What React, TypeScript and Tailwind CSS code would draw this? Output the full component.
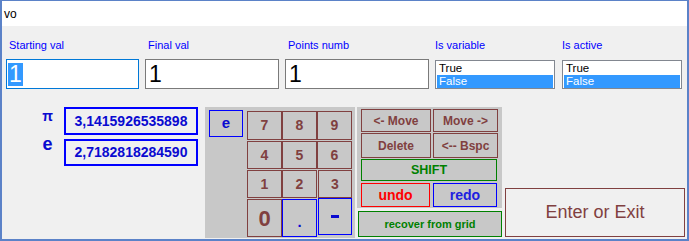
import React from 'react';

const brownBtn =
  'flex items-center justify-center border border-[#804040] bg-[#c8c8c8] text-[#804040] font-bold';

const Field: React.FC<{ label: string; w: string; ml: string; focused?: boolean }> = ({ label, w, ml, focused }) => (
  <div className={`flex flex-col ${w} ${ml}`}>
    <div className="h-[20px] pl-[3px] text-[11px] leading-[13px] text-[#0000ff]">{label}</div>
    <div
      className={`h-[30px] bg-white border flex items-center pl-[1px] ${
        focused ? 'border-[#0078d7]' : 'border-[#7a7a7a]'
      }`}
    >
      {focused ? (
        <span className="bg-[#3399ff] text-white text-[23px] leading-[23px] pl-[1px] pr-[1px]">1</span>
      ) : (
        <span className="text-black text-[23px] leading-[23px] pl-[2px]">1</span>
      )}
    </div>
  </div>
);

const ListField: React.FC<{ label: string; ml: string }> = ({ label, ml }) => (
  <div className={`flex flex-col w-[120px] ${ml}`}>
    <div className="h-[21px] text-[11px] leading-[13px] text-[#0000ff]">{label}</div>
    <div className="h-[29px] bg-white border border-[#828790] p-[1px] text-[11.5px] leading-[13px]">
      <div className="pl-[2px] text-black">True</div>
      <div className="pl-[2px] bg-[#3399ff] text-white">False</div>
    </div>
  </div>
);

export default function App() {
  const digits = ['7', '8', '9', '4', '5', '6', '1', '2', '3'];

  return (
    <div className="w-[689px] h-[241px] flex flex-col bg-[#f0f0f0] border-t border-b-2 border-x-2 border-[#5b82c8] font-['Liberation_Sans',Arial,sans-serif] overflow-hidden">
      {/* title strip */}
      <div className="h-[25px] bg-white pl-[2px] pt-[6px] text-[12px] leading-[14px] text-black">vo</div>

      {/* inputs */}
      <div className="h-[63px] pt-[13px] flex">
        <Field label="Starting val" w="w-[133px]" ml="ml-[4px]" focused />
        <Field label="Final val" w="w-[134px]" ml="ml-[6px]" />
        <Field label="Points numb" w="w-[144px]" ml="ml-[6px]" />
        <ListField label="Is variable" ml="ml-[6px]" />
        <ListField label="Is active" ml="ml-[7px]" />
      </div>

      {/* lower area */}
      <div className="h-[150px] pt-[18px] flex items-start">
        <div className="w-[203px] flex">
          <div className="w-[62px] pl-[29px] flex flex-col items-center font-bold text-[#0a0ad0]">
            <div className="mt-[1px] text-[14px] leading-[16px]">π</div>
            <div className="mt-[10px] text-[18px] leading-[20px]">e</div>
          </div>
          <div className="flex flex-col gap-[4px]">
            <div className="w-[134px] h-[28px] border-2 border-[#0000ff] flex items-center justify-center text-[14px] font-bold text-[#0a0ad0]">
              3,1415926535898
            </div>
            <div className="w-[134px] h-[27px] border-2 border-[#0000ff] flex items-center justify-center text-[14px] font-bold text-[#0a0ad0]">
              2,7182818284590
            </div>
          </div>
        </div>

        {/* keypad */}
        <div className="w-[150px] h-[131px] bg-[#c8c8c8] flex items-start pl-[4px] pt-[3px]">
          <div className="w-[34px] h-[27px] border border-[#0000ff] flex items-center justify-center text-[15px] font-bold text-[#0a0ad0]">
            e
          </div>
          <div className="ml-[4px] mt-[1px] grid grid-cols-[35px_35px_35px] grid-rows-[29px_28px_28px_38px] gap-y-[1px]">
            {digits.map((d) => (
              <div key={d} className={`${brownBtn} text-[14px] ${d === '3' ? 'ml-[1px]' : ''}`}>
                {d}
              </div>
            ))}
            <div className={`${brownBtn} text-[22px]`}>0</div>
            <div className="flex items-end justify-center pb-[7px] border border-[#0000ff] text-[15px] font-bold text-[#0a0ad0] leading-none">
              .
            </div>
            <div className="ml-[1px] -mt-[1px] mb-[2px] flex items-center justify-center border border-[#0000ff]">
              <div className="w-[8px] h-[3px] bg-[#0a0ad0]" />
            </div>
          </div>
        </div>

        {/* edit buttons */}
        <div className="ml-[2px] flex flex-col">
          <div className="w-[145px] h-[101px] bg-[#c8c8c8] pl-[4px] pt-[2px] flex flex-col">
            <div className="flex gap-[2px] h-[23px]">
              <div className={`${brownBtn} w-[70px] text-[12px]`}>&lt;- Move</div>
              <div className={`${brownBtn} w-[65px] text-[12px]`}>Move -&gt;</div>
            </div>
            <div className="flex gap-[2px] h-[25px] mt-[1px]">
              <div className={`${brownBtn} w-[70px] text-[12px]`}>Delete</div>
              <div className={`${brownBtn} w-[65px] text-[12px]`}>&lt;-- Bspc</div>
            </div>
            <div className="mt-[1px] w-[136px] h-[22px] border border-[#008000] flex items-center justify-center text-[12.5px] font-bold text-[#008000]">
              SHIFT
            </div>
            <div className="mt-[2px] flex gap-[3px] h-[24px]">
              <div className="w-[69px] border border-[#ff0000] flex items-center justify-center text-[14px] font-bold text-[#ff0000]">
                undo
              </div>
              <div className="w-[64px] border border-[#0000ff] flex items-center justify-center text-[14px] font-bold text-[#2020e0]">
                redo
              </div>
            </div>
          </div>
          <div className="ml-[1px] mt-[3px] w-[144px] h-[26px] bg-[#c8c8c8] border border-[#008000] flex items-center justify-center text-[11px] font-bold text-[#008000]">
            recover from grid
          </div>
        </div>

        <div className="ml-[3px] mt-[81px] w-[180px] h-[49px] border border-[#804040] flex items-center justify-center text-[18px] text-[#804040]">
          Enter or Exit
        </div>
      </div>
    </div>
  );
}
